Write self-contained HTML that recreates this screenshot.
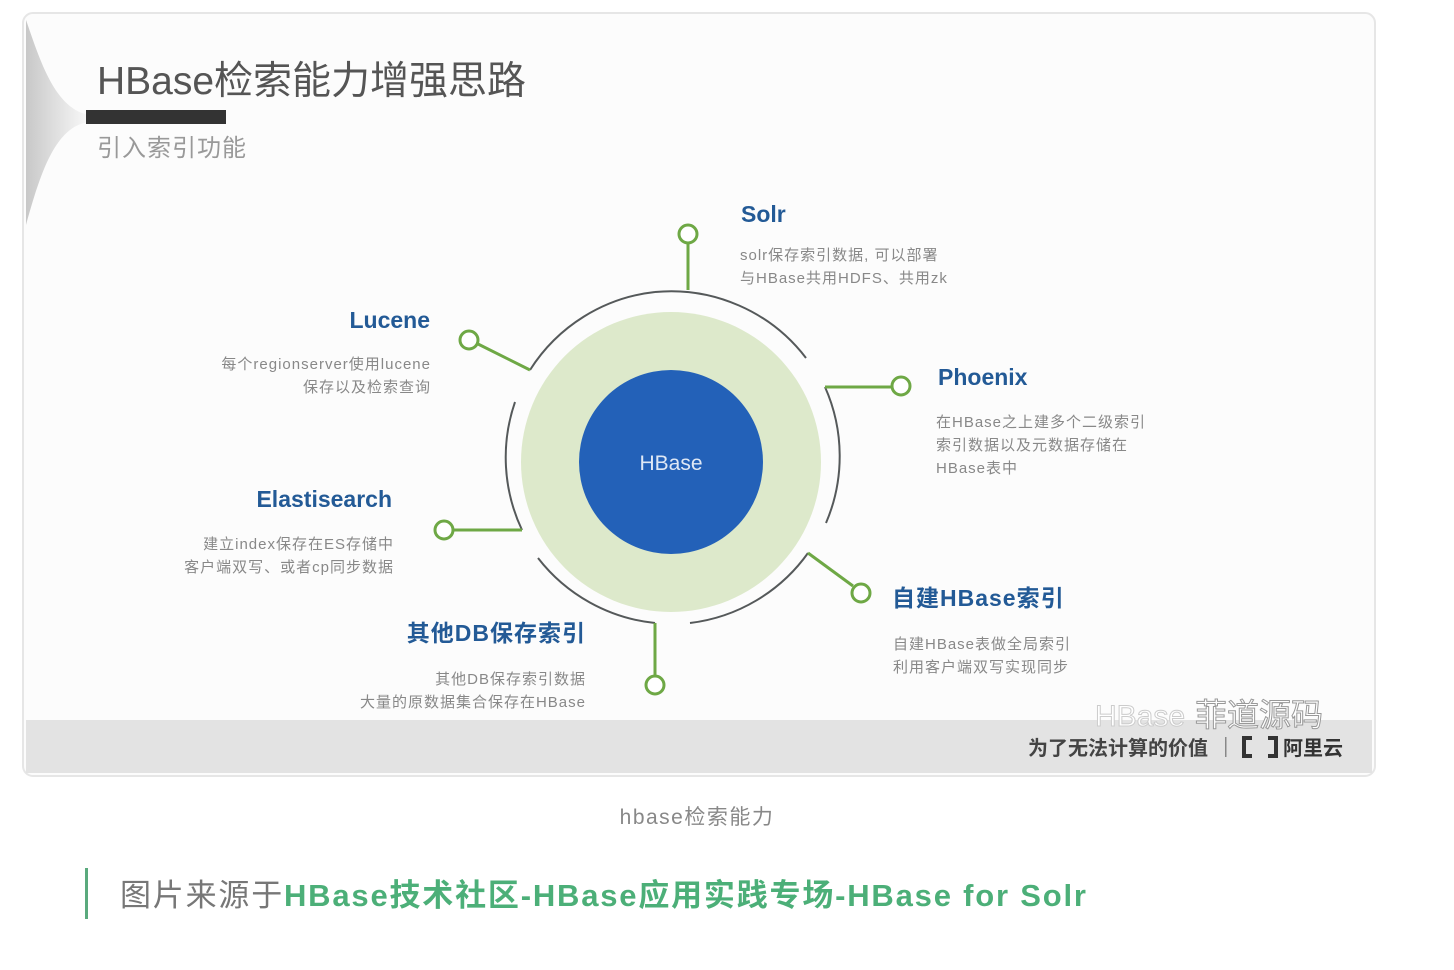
<!DOCTYPE html>
<html><head><meta charset="utf-8">
<style>
html,body{margin:0;padding:0;background:#fff;width:1454px;height:970px;overflow:hidden}
svg{display:block}
text{font-family:"Liberation Sans","Noto Sans CJK SC",sans-serif}
</style></head><body>
<svg width="1454" height="970" viewBox="0 0 1454 970" xmlns="http://www.w3.org/2000/svg">
<defs>
<linearGradient id="wg" x1="0" x2="1" y1="0" y2="0">
<stop offset="0" stop-color="#c8c8c8"/><stop offset="1" stop-color="#fafafa"/>
</linearGradient>
</defs>
<rect x="23" y="13" width="1352" height="763" rx="10" fill="#fcfcfc" stroke="#e6e6e6" stroke-width="2"/>
<rect x="26" y="720" width="1346" height="53" fill="#e3e3e3"/>
<path d="M26 20 C40 60 55 110 90 115 L90 122 C55 125 40 175 26 225 Z" fill="url(#wg)"/>
<text x="97" y="94" font-size="39" fill="#555">HBase检索能力增强思路</text>
<rect x="86" y="110" width="140" height="14" fill="#333"/>
<text x="97" y="156" font-size="24" fill="#999" letter-spacing="1">引入索引功能</text>
<circle cx="671" cy="462" r="150" fill="#dde9cb"/>
<circle cx="671" cy="462" r="92" fill="#2361b8"/>
<text x="671" y="470" font-size="21" fill="#dfe8f5" text-anchor="middle">HBase</text>
<g fill="none" stroke="#55595a" stroke-width="2">
<path d="M655 292 A170 170 0 0 1 806 358"/>
<path d="M825 387 A170 170 0 0 1 826 523"/>
<path d="M808 553 A170 170 0 0 1 690 623"/>
<path d="M655 623 A170 170 0 0 1 538 558"/>
<path d="M522 530 A170 170 0 0 1 515 402"/>
<path d="M530 370 A170 170 0 0 1 655 292"/>
</g>
<g fill="none" stroke="#6ea845" stroke-width="3">
<path d="M688 290 V244"/><circle cx="688" cy="234" r="9" fill="#fff"/>
<path d="M825 387 H891"/><circle cx="901" cy="386" r="9" fill="#fff"/>
<path d="M808 553 L853 586"/><circle cx="861" cy="593" r="9" fill="#fff"/>
<path d="M655 623 V675"/><circle cx="655" cy="685" r="9" fill="#fff"/>
<path d="M522 530 H454"/><circle cx="444" cy="530" r="9" fill="#fff"/>
<path d="M530 370 L478 344"/><circle cx="469" cy="340" r="9" fill="#fff"/>
</g>
<g fill="#235a96" font-weight="bold" font-size="23">
<text x="741" y="222">Solr</text>
<text x="430" y="328" text-anchor="end">Lucene</text>
<text x="938" y="385">Phoenix</text>
<text x="392" y="507" text-anchor="end">Elastisearch</text>
<text x="586" y="641" text-anchor="end" letter-spacing="1">其他DB保存索引</text>
<text x="892" y="606" letter-spacing="1">自建HBase索引</text>
</g>
<g fill="#888" font-size="15" letter-spacing="1">
<text x="740" y="260">solr保存索引数据, 可以部署</text>
<text x="740" y="283">与HBase共用HDFS、共用zk</text>
<text x="431" y="369" text-anchor="end">每个regionserver使用lucene</text>
<text x="431" y="392" text-anchor="end">保存以及检索查询</text>
<text x="936" y="427">在HBase之上建多个二级索引</text>
<text x="936" y="450">索引数据以及元数据存储在</text>
<text x="936" y="473">HBase表中</text>
<text x="394" y="549" text-anchor="end">建立index保存在ES存储中</text>
<text x="394" y="572" text-anchor="end">客户端双写、或者cp同步数据</text>
<text x="586" y="684" text-anchor="end">其他DB保存索引数据</text>
<text x="586" y="707" text-anchor="end">大量的原数据集合保存在HBase</text>
<text x="893" y="649">自建HBase表做全局索引</text>
<text x="893" y="672">利用客户端双写实现同步</text>
</g>
<text x="1095" y="726" font-size="30" fill="#fff" stroke="#ccc" stroke-width="1">HBase</text>
<text x="1195" y="726" font-size="32" fill="#fff" stroke="#999" stroke-width="1">菲道源码</text>
<text x="1028" y="755" font-size="20" fill="#444" font-weight="bold">为了无法计算的价值</text>
<rect x="1225" y="737" width="1.5" height="20" fill="#888"/>
<path d="M1252 738 h-8 v18 h8 M1268 738 h8 v18 h-8" fill="none" stroke="#333" stroke-width="4"/>
<text x="1283" y="755" font-size="20" fill="#333" font-weight="bold">阿里云</text>
<text x="697" y="824" font-size="21" fill="#888" text-anchor="middle" letter-spacing="1.5">hbase检索能力</text>
<rect x="85" y="868" width="3" height="51" fill="#5aaa7d"/>
<text x="120" y="906" font-size="31" fill="#777" letter-spacing="1.8">图片来源于<tspan fill="#4caf78" font-weight="bold">HBase技术社区-HBase应用实践专场-HBase for Solr</tspan></text>
</svg>
</body></html>
